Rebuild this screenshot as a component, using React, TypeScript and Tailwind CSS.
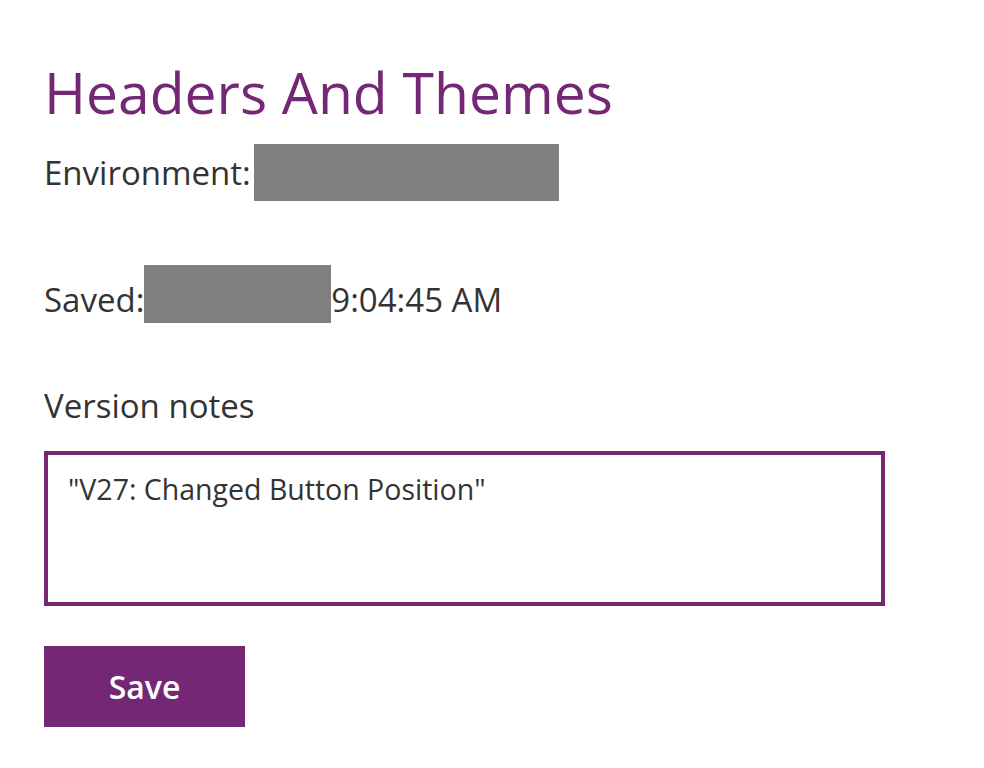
import { useState } from 'react';

const font = { fontFamily: '"Open Sans", "Noto Sans", sans-serif' };

export default function App() {
  const [notes, setNotes] = useState('"V27: Changed Button Position"');

  return (
    <div className="min-h-screen bg-white pl-[44px] pt-[57px] text-[#333333]" style={font}>
      <h1 className="text-[57px] leading-[70px] font-normal text-[#742774]">Headers And Themes</h1>

      {/* Environment */}
      <div className="mt-[17px] flex items-end">
        <span className="text-[33px] leading-[56px]">Environment:</span>
        <div className="ml-[3px] h-[57px] w-[305px] bg-[#808080]" />
      </div>

      {/* Saved timestamp */}
      <div className="mt-[64px] flex items-end">
        <span className="text-[33px] leading-[46px]">Saved:</span>
        <div className="h-[58px] w-[187px] bg-[#808080]" />
        <span className="text-[33px] leading-[46px]">9:04:45 AM</span>
      </div>

      <label className="mt-[61px] block text-[33px] leading-[44px]">Version notes</label>

      <textarea
        value={notes}
        onChange={(e) => setNotes(e.target.value)}
        className="mt-[23px] block h-[155px] w-[841px] resize-none border-[4px] border-[#742774] px-[20px] pt-[14px] text-[28.5px] leading-[40px] text-[#333333] outline-none"
        style={font}
      />

      <button className="mt-[40px] flex h-[81px] w-[201px] items-center justify-center bg-[#742774] text-[32px] font-semibold text-white">
        Save
      </button>
    </div>
  );
}
